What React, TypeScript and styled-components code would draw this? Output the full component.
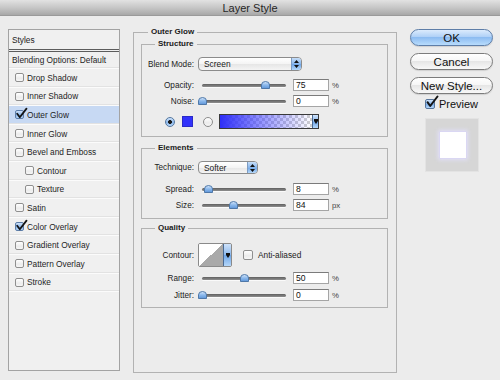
import React from "react";
import styled, { createGlobalStyle, css } from "styled-components";

const GlobalStyle = createGlobalStyle`
  html, body { margin: 0; padding: 0; background: #ececec; }
  body { font-family: "Liberation Sans", Arial, sans-serif; color: #1e1e1e; }
  * { box-sizing: border-box; }
`;

const Dialog = styled.div`
  width: 500px;
  height: 380px;
  background: #ececec;
  display: flex;
  flex-direction: column;
  overflow: hidden;
`;

const TitleBar = styled.div`
  height: 16px;
  flex: none;
  background: linear-gradient(#e2e2e2, #c4c4c4 55%, #a8a8a8);
  border-bottom: 1px solid #9a9a9a;
  display: flex;
  align-items: center;
  justify-content: center;
  font-size: 11px;
  color: #262626;
  padding-top: 1px;
`;

const Body = styled.div`
  display: flex;
  align-items: flex-start;
  padding: 11px 0 0 8px;
  gap: 13px;
`;

/* ---------- left styles list ---------- */
const StylesPanel = styled.div`
  width: 112px;
  height: 342px;
  margin-top: 2px;
  border: 1px solid #a3a3a3;
  background: #f0f0f0;
  display: flex;
  flex-direction: column;
`;

const StylesHeader = styled.div`
  height: 22px;
  flex: none;
  border-bottom: 3px double #5c5c5c;
  display: flex;
  align-items: center;
  padding-left: 3px;
  font-size: 8.3px;
  color: #222;
`;

const ListRow = styled.div<{ $h: number; $selected?: boolean; $indent?: boolean; $plain?: boolean }>`
  height: ${(p) => p.$h}px;
  flex: none;
  display: flex;
  align-items: center;
  border-bottom: 1px solid #fbfbfb;
  box-shadow: inset 0 -1px 0 #e2e2e2;
  font-size: 8.3px;
  color: #1e1e1e;
  padding-left: ${(p) => (p.$plain ? 3 : p.$indent ? 16 : 6)}px;
  background: ${(p) => (p.$selected ? "#c7d9f3" : "transparent")};
`;

const SmallBox = styled.span<{ $checked?: boolean; $size?: number }>`
  position: relative;
  flex: none;
  width: ${(p) => p.$size ?? 9}px;
  height: ${(p) => p.$size ?? 9}px;
  margin-right: 3px;
  border: 1px solid #8f8f8f;
  border-radius: 2px;
  background: linear-gradient(#ffffff, #ececec 60%, #f6f6f6);
  ${(p) =>
    p.$checked &&
    css`
      border-color: #5d7ea9;
      background: linear-gradient(#cfe2fa, #8db8ec 55%, #b6d6f8);
    `}
`;

const CheckMark = styled.svg`
  position: absolute;
  left: 0px;
  top: -3px;
  overflow: visible;
`;

const Check: React.FC<{ checked?: boolean; size?: number }> = ({ checked, size }) => (
  <SmallBox $checked={checked} $size={size}>
    {checked && (
      <CheckMark width="11" height="11" viewBox="0 0 11 11">
        <path d="M1.2 5.8 L3.8 9.2 L10.5 0.6" fill="none" stroke="#141414" strokeWidth="1.8" strokeLinecap="round" strokeLinejoin="round" />
      </CheckMark>
    )}
  </SmallBox>
);

/* ---------- middle panel ---------- */
const Group = styled.fieldset<{ $outer?: boolean; $mt?: number; $pt?: number; $pb?: number }>`
  margin: ${(p) => p.$mt ?? 0}px 0 0 0;
  min-width: 0;
  border: 1px solid #b2b2b2;
  ${(p) =>
    p.$outer
      ? css`
          width: 264px;
          height: 346px;
          padding: 2px 8px 0 7px;
        `
      : css`
          width: 247px;
          padding: ${p.$pt ?? 8}px 0 ${p.$pb ?? 7}px 0;
        `}
`;

const Legend = styled.legend<{ $outer?: boolean }>`
  font-weight: bold;
  font-size: 8px;
  line-height: 10px;
  color: #1a1a1a;
  padding: 0 3px;
  margin-left: ${(p) => (p.$outer ? 7 : 13)}px;
`;

const Row = styled.div<{ $h: number; $mt?: number; $pl?: number }>`
  display: flex;
  align-items: center;
  height: ${(p) => p.$h}px;
  margin-top: ${(p) => p.$mt ?? 0}px;
  padding-left: ${(p) => p.$pl ?? 0}px;
`;

const Label = styled.span`
  width: 52px;
  flex: none;
  text-align: right;
  margin-right: 4px;
  font-size: 8.2px;
  color: #222;
  white-space: nowrap;
`;

const SelectBox = styled.div<{ $w: number; $h: number }>`
  width: ${(p) => p.$w}px;
  height: ${(p) => p.$h}px;
  display: flex;
  border: 1px solid #8b8b8b;
  border-radius: 4px;
  background: linear-gradient(#ffffff, #f4f4f4 50%, #e6e6e6 51%, #f4f4f4);
  overflow: hidden;
`;

const SelectText = styled.span`
  flex: 1;
  padding-left: 5px;
  display: flex;
  align-items: center;
  font-size: 8.4px;
  color: #1a1a1a;
`;

const Stepper = styled.span`
  width: 10px;
  flex: none;
  border-left: 1px solid #7d9cc2;
  background: linear-gradient(#c6def9, #88b6ec 50%, #6ea5e6 51%, #b4d7fa);
  display: flex;
  align-items: center;
  justify-content: center;
`;

const StepperIcon = () => (
  <svg width="5" height="8" viewBox="0 0 5 8">
    <path d="M2.5 0 L5 3 L0 3 Z M0 5 L5 5 L2.5 8 Z" fill="#111" />
  </svg>
);

const SliderBox = styled.div`
  position: relative;
  width: 92px;
  height: 12px;
  flex: none;
  display: flex;
  align-items: center;
  padding: 0 4px;
`;

const Track = styled.div`
  flex: 1;
  height: 3px;
  border-radius: 2px;
  background: linear-gradient(#5f5f5f, #8f8f8f);
  box-shadow: 0 1px 0 #fafafa;
`;

const Thumb = styled.svg`
  position: absolute;
  top: 2px;
`;

const Field = styled.div`
  width: 36px;
  height: 12px;
  flex: none;
  margin-left: 3px;
  background: #fff;
  border: 1px solid #a5a5a5;
  border-top-color: #7b7b7b;
  font-size: 8.6px;
  line-height: 10px;
  padding-left: 2px;
  color: #111;
`;

const Unit = styled.span`
  margin-left: 3px;
  font-size: 7.8px;
  color: #444;
`;

const Slider: React.FC<{ label: string; value: string; pos: number; unit: string; mt: number }> = ({
  label,
  value,
  pos,
  unit,
  mt,
}) => (
  <Row $h={12} $mt={mt}>
    <Label>{label}</Label>
    <SliderBox>
      <Track />
      <Thumb width="9" height="8" viewBox="0 0 9 8" style={{ left: 4 + pos * 84 - 4.5 }}>
        <defs>
          <linearGradient id="thg" x1="0" y1="0" x2="0" y2="1">
            <stop offset="0" stopColor="#d8e8fb" />
            <stop offset="0.5" stopColor="#8cb9ec" />
            <stop offset="1" stopColor="#5e95d8" />
          </linearGradient>
        </defs>
        <path d="M0.5 7.5 L0.5 4 Q0.5 0.5 4.5 0.5 Q8.5 0.5 8.5 4 L8.5 7.5 Z" fill="url(#thg)" stroke="#4f78a8" strokeWidth="1" />
      </Thumb>
    </SliderBox>
    <Field>{value}</Field>
    <Unit>{unit}</Unit>
  </Row>
);

const Radio = styled.span<{ $on?: boolean; $ml?: number }>`
  width: 10px;
  height: 10px;
  flex: none;
  margin-left: ${(p) => p.$ml ?? 0}px;
  border-radius: 50%;
  border: 1px solid ${(p) => (p.$on ? "#55779f" : "#8c8c8c")};
  background: ${(p) =>
    p.$on
      ? "radial-gradient(circle at 50% 50%, #1a1a1a 0 1.8px, transparent 2.2px), linear-gradient(#cfe3fb, #8cb8ec 55%, #b8d8fa)"
      : "linear-gradient(#ffffff, #ececec 60%, #f6f6f6)"};
`;

const Swatch = styled.span`
  width: 11px;
  height: 11px;
  flex: none;
  margin-left: 7px;
  background: #3232fb;
  border: 1px solid #2a2ac8;
`;

const GradientPicker = styled.div`
  width: 100px;
  height: 15px;
  flex: none;
  margin-left: 6px;
  display: flex;
  border: 1px solid #3a3a3a;
`;

const GradientFill = styled.span`
  flex: 1;
  background: linear-gradient(to right, #2f2ff8, rgba(60, 60, 255, 0.55) 45%, rgba(80, 80, 255, 0) 100%),
    repeating-conic-gradient(#cfcfcf 0% 25%, #ffffff 0% 50%) 0 0 / 6px 6px;
`;

const DropArrow = styled.span<{ $w: number }>`
  width: ${(p) => p.$w}px;
  flex: none;
  border-left: 1px solid #4a6a93;
  background: linear-gradient(#cfe3fb, #8cb8ec 50%, #6ea5e6 51%, #b4d7fa);
  display: flex;
  align-items: center;
  justify-content: center;
`;

const DownIcon = () => (
  <svg width="4" height="5" viewBox="0 0 4 5">
    <path d="M0 0 L4 0 L4 2 L2 5 L0 2 Z" fill="#111" />
  </svg>
);

const ContourPicker = styled.div`
  width: 34px;
  height: 24px;
  flex: none;
  display: flex;
  border: 1px solid #8a8a8a;
  border-radius: 2px;
  overflow: hidden;
`;

const ContourThumb = styled.span`
  flex: 1;
  background: linear-gradient(to top left, #a9a9a9 50%, #ffffff 50%);
`;

const CheckLabel = styled.span`
  display: flex;
  align-items: center;
  gap: 2px;
  margin-left: 11px;
  font-size: 8.3px;
  color: #222;
`;

/* ---------- right column ---------- */
const RightCol = styled.div`
  width: 83px;
  margin-top: 2px;
  display: flex;
  flex-direction: column;
  align-items: center;
`;

const Button = styled.div<{ $primary?: boolean; $mt?: number }>`
  width: 83px;
  height: 17px;
  margin-top: ${(p) => p.$mt ?? 0}px;
  border-radius: 9px;
  display: flex;
  align-items: center;
  justify-content: center;
  font-size: 11.5px;
  color: #111;
  border: 1px solid ${(p) => (p.$primary ? "#5e7ea8" : "#7c7c7c")};
  background: ${(p) =>
    p.$primary
      ? "linear-gradient(#dcebfc, #b0d1f7 45%, #8dbcf1 50%, #b8dcfc)"
      : "linear-gradient(#ffffff, #f6f6f6 45%, #e6e6e6 50%, #f8f8f8)"};
  box-shadow: 0 1px 1px rgba(0, 0, 0, 0.12);
`;

const PreviewToggle = styled.div`
  display: flex;
  align-items: center;
  margin-top: 5px;
  height: 10px;
  font-size: 11px;
  color: #111;
`;

const BigBox = styled.span`
  position: relative;
  width: 10px;
  height: 10px;
  margin-right: 4px;
  border: 1px solid #56759c;
  border-radius: 2px;
  background: linear-gradient(#cfe3fb, #7fb0ea 55%, #b4d6fa);
`;

const PreviewFrame = styled.div`
  width: 54px;
  height: 54px;
  margin-top: 9px;
  background: #d6d6d6;
  border: 1px solid #e3e3e3;
  display: flex;
  align-items: center;
  justify-content: center;
`;

const PreviewSquare = styled.div`
  width: 26px;
  height: 26px;
  margin-left: 2px;
  background: #ffffff;
  box-shadow: 0 0 1px 0 rgba(190, 180, 255, 0.9), 0 0 4px 2px rgba(228, 226, 255, 0.85);
`;

const styleItems: { label: string; checked?: boolean; selected?: boolean; indent?: boolean }[] = [
  { label: "Drop Shadow" },
  { label: "Inner Shadow" },
  { label: "Outer Glow", checked: true, selected: true },
  { label: "Inner Glow" },
  { label: "Bevel and Emboss" },
  { label: "Contour", indent: true },
  { label: "Texture", indent: true },
  { label: "Satin" },
  { label: "Color Overlay", checked: true },
  { label: "Gradient Overlay" },
  { label: "Pattern Overlay" },
  { label: "Stroke" },
];

export default function App() {
  return (
    <>
      <GlobalStyle />
      <Dialog>
        <TitleBar>Layer Style</TitleBar>
        <Body>
          <StylesPanel>
            <StylesHeader>Styles</StylesHeader>
            <ListRow $h={17} $plain>
              Blending Options: Default
            </ListRow>
            {styleItems.map((it) => (
              <ListRow key={it.label} $h={18.6} $selected={it.selected} $indent={it.indent}>
                <Check checked={it.checked} />
                {it.label}
              </ListRow>
            ))}
          </StylesPanel>

          <Group $outer>
            <Legend $outer>Outer Glow</Legend>
            <Group $pt={8} $pb={7}>
              <Legend>Structure</Legend>
              <Row $h={14}>
                <Label>Blend Mode:</Label>
                <SelectBox $w={104} $h={14}>
                  <SelectText>Screen</SelectText>
                  <Stepper>
                    <StepperIcon />
                  </Stepper>
                </SelectBox>
              </Row>
              <Slider label="Opacity:" value="75" pos={0.75} unit="%" mt={8} />
              <Slider label="Noise:" value="0" pos={0} unit="%" mt={4} />
              <Row $h={15} $mt={7} $pl={23}>
                <Radio $on />
                <Swatch />
                <Radio $ml={10} />
                <GradientPicker>
                  <GradientFill />
                  <DropArrow $w={6}>
                    <DownIcon />
                  </DropArrow>
                </GradientPicker>
              </Row>
            </Group>

            <Group $mt={6} $pt={8} $pb={7}>
              <Legend>Elements</Legend>
              <Row $h={13}>
                <Label>Technique:</Label>
                <SelectBox $w={60} $h={13}>
                  <SelectText>Softer</SelectText>
                  <Stepper>
                    <StepperIcon />
                  </Stepper>
                </SelectBox>
              </Row>
              <Slider label="Spread:" value="8" pos={0.08} unit="%" mt={9} />
              <Slider label="Size:" value="84" pos={0.37} unit="px" mt={4} />
            </Group>

            <Group $mt={4} $pt={10} $pb={6}>
              <Legend>Quality</Legend>
              <Row $h={24}>
                <Label>Contour:</Label>
                <ContourPicker>
                  <ContourThumb />
                  <DropArrow $w={8}>
                    <DownIcon />
                  </DropArrow>
                </ContourPicker>
                <CheckLabel>
                  <Check size={10} />
                  Anti-aliased
                </CheckLabel>
              </Row>
              <Slider label="Range:" value="50" pos={0.5} unit="%" mt={5} />
              <Slider label="Jitter:" value="0" pos={0} unit="%" mt={5} />
            </Group>
          </Group>

          <RightCol>
            <Button $primary>OK</Button>
            <Button $mt={7}>Cancel</Button>
            <Button $mt={7}>New Style...</Button>
            <PreviewToggle>
              <BigBox>
                <CheckMark width="12" height="12" viewBox="0 0 12 12" style={{ top: -4, left: 0 }}>
                  <path d="M1.5 6.2 L4.2 10 L11.5 0.5" fill="none" stroke="#141414" strokeWidth="2" strokeLinecap="round" strokeLinejoin="round" />
                </CheckMark>
              </BigBox>
              Preview
            </PreviewToggle>
            <PreviewFrame>
              <PreviewSquare />
            </PreviewFrame>
          </RightCol>
        </Body>
      </Dialog>
    </>
  );
}
